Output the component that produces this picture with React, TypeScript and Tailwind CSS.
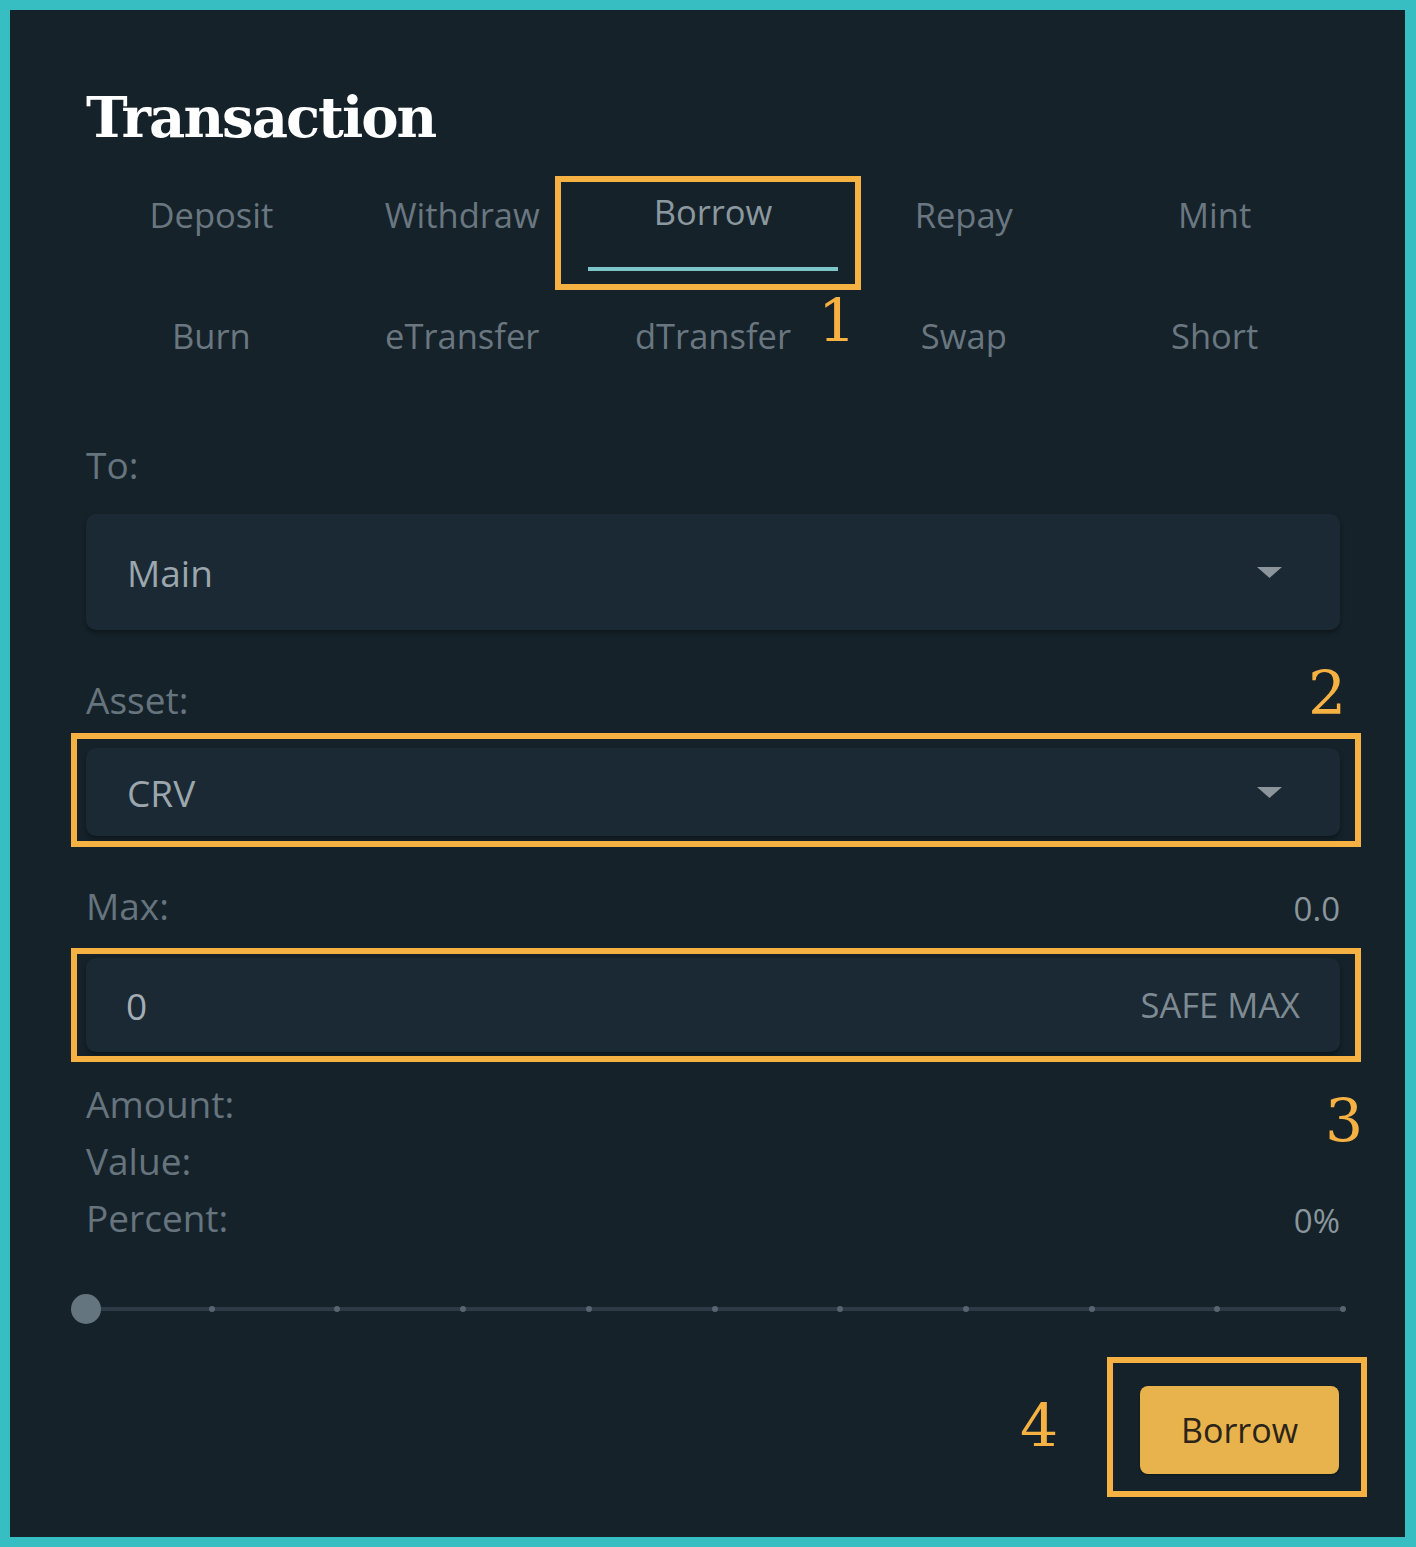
import React from "react";

const TABS = [
  ["Deposit", "Withdraw", "Borrow", "Repay", "Mint"],
  ["Burn", "eTransfer", "dTransfer", "Swap", "Short"],
];

const SANS = "font-['Open_Sans',_'Noto_Sans',_sans-serif]";
const SERIF = "font-['DejaVu_Serif',_'Liberation_Serif',_serif]";

function Caret() {
  return (
    <svg width="25" height="11" viewBox="0 0 25 11" className="shrink-0">
      <path d="M0 0 H25 L12.5 11 Z" fill="#8b959b" />
    </svg>
  );
}

function Select({ value, height }: { value: string; height: string }) {
  return (
    <div
      className={`flex ${height} items-center justify-between rounded-[10px] bg-[#1b2934] pl-[41px] pr-[58px] shadow-[0_3px_4px_rgba(0,0,0,0.35)]`}
    >
      <span className="text-[37px] leading-none text-[#9ba6ad]">{value}</span>
      <Caret />
    </div>
  );
}

function Mark({ className }: { className: string }) {
  return <div className={`pointer-events-none absolute border-[6px] border-[#f6b143] ${className}`} />;
}

function Num({ n, className }: { n: string; className: string }) {
  return (
    <span className={`pointer-events-none absolute text-[60px] leading-none text-[#f6b143] ${SERIF} ${className}`}>
      {n}
    </span>
  );
}

function Slider() {
  const ticks = Array.from({ length: 10 }, (_, i) => i + 1);
  return (
    <div className="relative h-[30px] w-[1257px]">
      <div className="absolute left-0 right-0 top-[13px] h-[4px] bg-[#2c3b45]" />
      {ticks.map((i) => (
        <div
          key={i}
          className="absolute top-[12px] size-[6px] -translate-x-1/2 rounded-full bg-[#56656f]"
          style={{ left: `${i * 10}%` }}
        />
      ))}
      <div className="absolute left-[-15px] top-0 size-[30px] rounded-full bg-[#64757f]" />
    </div>
  );
}

export default function App() {
  return (
    <div className={`relative h-[1547px] w-[1416px] bg-[#37bec2] pb-[10px] pl-[10px] pr-[11px] pt-[10px] ${SANS}`}>
      <div className="flex h-full flex-col bg-[#15222a] pl-[76px] pr-[65px]">
        <h1 className={`mt-[69px] h-[76px] text-[56px] font-bold leading-[76px] tracking-[-2px] text-white ${SERIF}`}>
          Transaction
        </h1>

        <div className="mt-[23px] grid grid-cols-5 gap-y-[28px]">
          {TABS.flat().map((t) => {
            const active = t === "Borrow";
            return (
              <div key={t} className="flex h-[93px] flex-col items-center pt-[11px]">
                <span
                  className={`h-[48px] text-[34.5px] leading-[48px] ${
                    active ? "-translate-y-[1px] text-[#8c989f]" : "translate-y-[2px] text-[#6a7780]"
                  }`}
                >
                  {t}
                </span>
                <div className={`mt-auto h-[4px] w-full ${active ? "bg-[#7cc6c9]" : ""}`} />
              </div>
            );
          })}
        </div>

        <div className="mt-[49px] h-[48px] text-[37px] leading-[48px] text-[#66747e]">To:</div>
        <div className="mt-[25px]">
          <Select value="Main" height="h-[116px]" />
        </div>

        <div className="mt-[46px] h-[48px] text-[37px] leading-[48px] text-[#66747e]">Asset:</div>
        <div className="mt-[24px]">
          <Select value="CRV" height="h-[88px]" />
        </div>

        <div className="mt-[46px] flex h-[48px] items-center justify-between">
          <span className="text-[37px] leading-[48px] text-[#66747e]">Max:</span>
          <span className="translate-y-[3px] text-[33px] leading-[48px] text-[#8a959c]">0.0</span>
        </div>

        <div className="mt-[28px] flex h-[94px] items-center justify-between rounded-[10px] bg-[#1b2934] pl-[40px] pr-[40px] shadow-[0_3px_4px_rgba(0,0,0,0.35)]">
          <span className="text-[37px] leading-none text-[#a3adb3]">0</span>
          <span className="text-[34.5px] leading-none text-[#7f8b92]">SAFE MAX</span>
        </div>

        <div className="mt-[23px] flex flex-col text-[37px] leading-[57px] text-[#66747e]">
          <span>Amount:</span>
          <span>Value:</span>
          <div className="flex items-center justify-between">
            <span>Percent:</span>
            <span className="translate-y-[3px] text-[33px] text-[#8a959c]">0%</span>
          </div>
        </div>

        <div className="mt-[48px]">
          <Slider />
        </div>

        <div className="mt-[62px] flex justify-end pr-[1px]">
          <button
            type="button"
            className="flex h-[88px] w-[199px] items-center justify-center rounded-[8px] bg-[#e8b34c] text-[34px] text-[#2a2419] shadow-[0_1px_2px_rgba(0,0,0,0.4)]"
          >
            Borrow
          </button>
        </div>
      </div>

      <Mark className="left-[555px] top-[176px] h-[114px] w-[306px]" />
      <Mark className="left-[71px] top-[733px] h-[114px] w-[1290px]" />
      <Mark className="left-[71px] top-[948px] h-[114px] w-[1290px]" />
      <Mark className="left-[1107px] top-[1357px] h-[140px] w-[260px]" />

      <Num n="1" className="left-[818px] top-[291px]" />
      <Num n="2" className="left-[1308px] top-[663px]" />
      <Num n="3" className="left-[1325px] top-[1091px]" />
      <Num n="4" className="left-[1020px] top-[1396px]" />
    </div>
  );
}
